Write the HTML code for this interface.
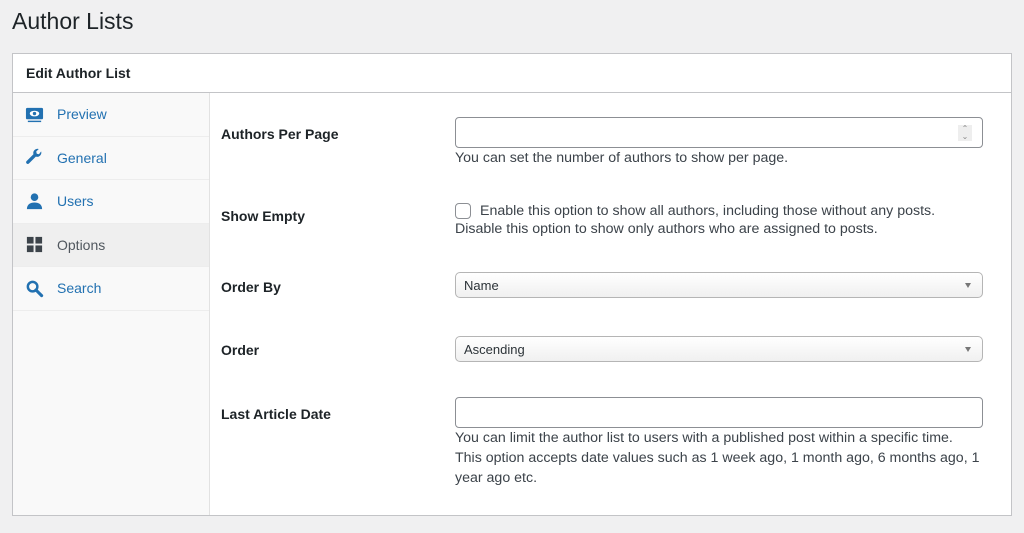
<!DOCTYPE html>
<html><head><style>
*{box-sizing:border-box;margin:0;padding:0}
body{width:1024px;height:533px;background:#f0f0f1;font-family:"Liberation Sans",sans-serif;color:#1d2327;position:relative;overflow:hidden}
h1{position:absolute;left:12px;top:8px;font-size:23px;font-weight:400;color:#1d2327}
.box{position:absolute;left:12px;top:53px;width:1000px;height:463px;background:#fff;border:1px solid #c3c4c7}
.hd{height:39px;border-bottom:1px solid #c3c4c7;padding:11px 13px;font-size:14px;font-weight:700}
.side{position:absolute;left:0;top:39px;width:197px;bottom:0;background:#f9f9f9;border-right:1px solid #e2e2e2}
.it{height:43.5px;border-bottom:1px solid #ededed;display:flex;align-items:center;padding-left:12px;font-size:14px;color:#2271b1}
.it svg{width:19px;height:19px;margin-right:13px}
.it.act{background:#efefef;color:#50575e}
.lab{position:absolute;left:208px;font-size:14px;font-weight:700}
.inp{position:absolute;left:442px;width:528px;height:31px;border:1px solid #8c8f94;border-radius:4px;background:#fff}
.sel{position:absolute;left:442px;width:528px;height:26px;border:1px solid #b5b5b5;border-radius:5px;background:linear-gradient(#fff,#f0f0f0);font-size:13px;padding:5px 8px;color:#2c3338}
.sel:after{content:"";position:absolute;right:11px;top:10px;border:3.5px solid transparent;border-top:5px solid #777}
.d{position:absolute;left:442px;font-size:14.2px;color:#3c434a;line-height:20px}
</style></head><body>
<h1>Author Lists</h1>
<div class="box">
<div class="hd">Edit Author List</div>
<div class="side">
<div class="it"><svg viewBox="0 0 20 20"><rect x="1" y="3" width="18" height="12" rx="1.5" fill="#2271b1"/><ellipse cx="10" cy="9" rx="5" ry="3" fill="#fff"/><circle cx="10" cy="9" r="1.8" fill="#2271b1"/><rect x="3" y="16.5" width="14" height="1.5" fill="#2271b1"/></svg>Preview</div>
<div class="it"><svg viewBox="0 0 20 20"><path d="M17 3.5a4.5 4.5 0 0 1-5.6 5.6L4 16.5a1.8 1.8 0 0 1-2.5-2.5l7.4-7.4A4.5 4.5 0 0 1 14.5 1l-2.7 2.7.6 2.3 2.3.6z" fill="#2271b1"/></svg>General</div>
<div class="it"><svg viewBox="0 0 20 20"><circle cx="10" cy="5.5" r="4" fill="#2271b1"/><path d="M2 18c0-5 3.5-7 8-7s8 2 8 7z" fill="#2271b1"/></svg>Users</div>
<div class="it act"><svg viewBox="0 0 20 20" fill="#3c434a"><rect x="2" y="2" width="7" height="7"/><rect x="11" y="2" width="7" height="7"/><rect x="2" y="11" width="7" height="7"/><rect x="11" y="11" width="7" height="7"/></svg>Options</div>
<div class="it"><svg viewBox="0 0 20 20"><circle cx="8" cy="8" r="5" fill="none" stroke="#2271b1" stroke-width="2.6"/><path d="M11.5 11.5l6 6" stroke="#2271b1" stroke-width="3.2" stroke-linecap="round"/></svg>Search</div>
</div>
<div class="lab" style="top:72px">Authors Per Page</div>
<div class="inp" style="top:63px"><div style="position:absolute;right:10px;top:7px;width:14px;height:16px;background:#eee;font-size:8px;color:#888;text-align:center;line-height:8px">⌃<br>⌄</div></div>
<div class="d" style="top:94px">You can set the number of authors to show per page.</div>
<div class="lab" style="top:154px">Show Empty</div>
<div style="position:absolute;left:442px;top:149px;width:16px;height:16px;border:1px solid #8c8f94;border-radius:4px;background:#fff"></div>
<div class="d" style="top:147px;left:467px">Enable this option to show all authors, including those without any posts.</div>
<div class="d" style="top:165px">Disable this option to show only authors who are assigned to posts.</div>
<div class="lab" style="top:225px">Order By</div>
<div class="sel" style="top:218px">Name</div>
<div class="lab" style="top:288px">Order</div>
<div class="sel" style="top:282px">Ascending</div>
<div class="lab" style="top:352px">Last Article Date</div>
<div class="inp" style="top:343px"></div>
<div class="d" style="top:374px">You can limit the author list to users with a published post within a specific time.<br>This option accepts date values such as 1 week ago, 1 month ago, 6 months ago, 1<br>year ago etc.</div>
</div>
</body></html>
